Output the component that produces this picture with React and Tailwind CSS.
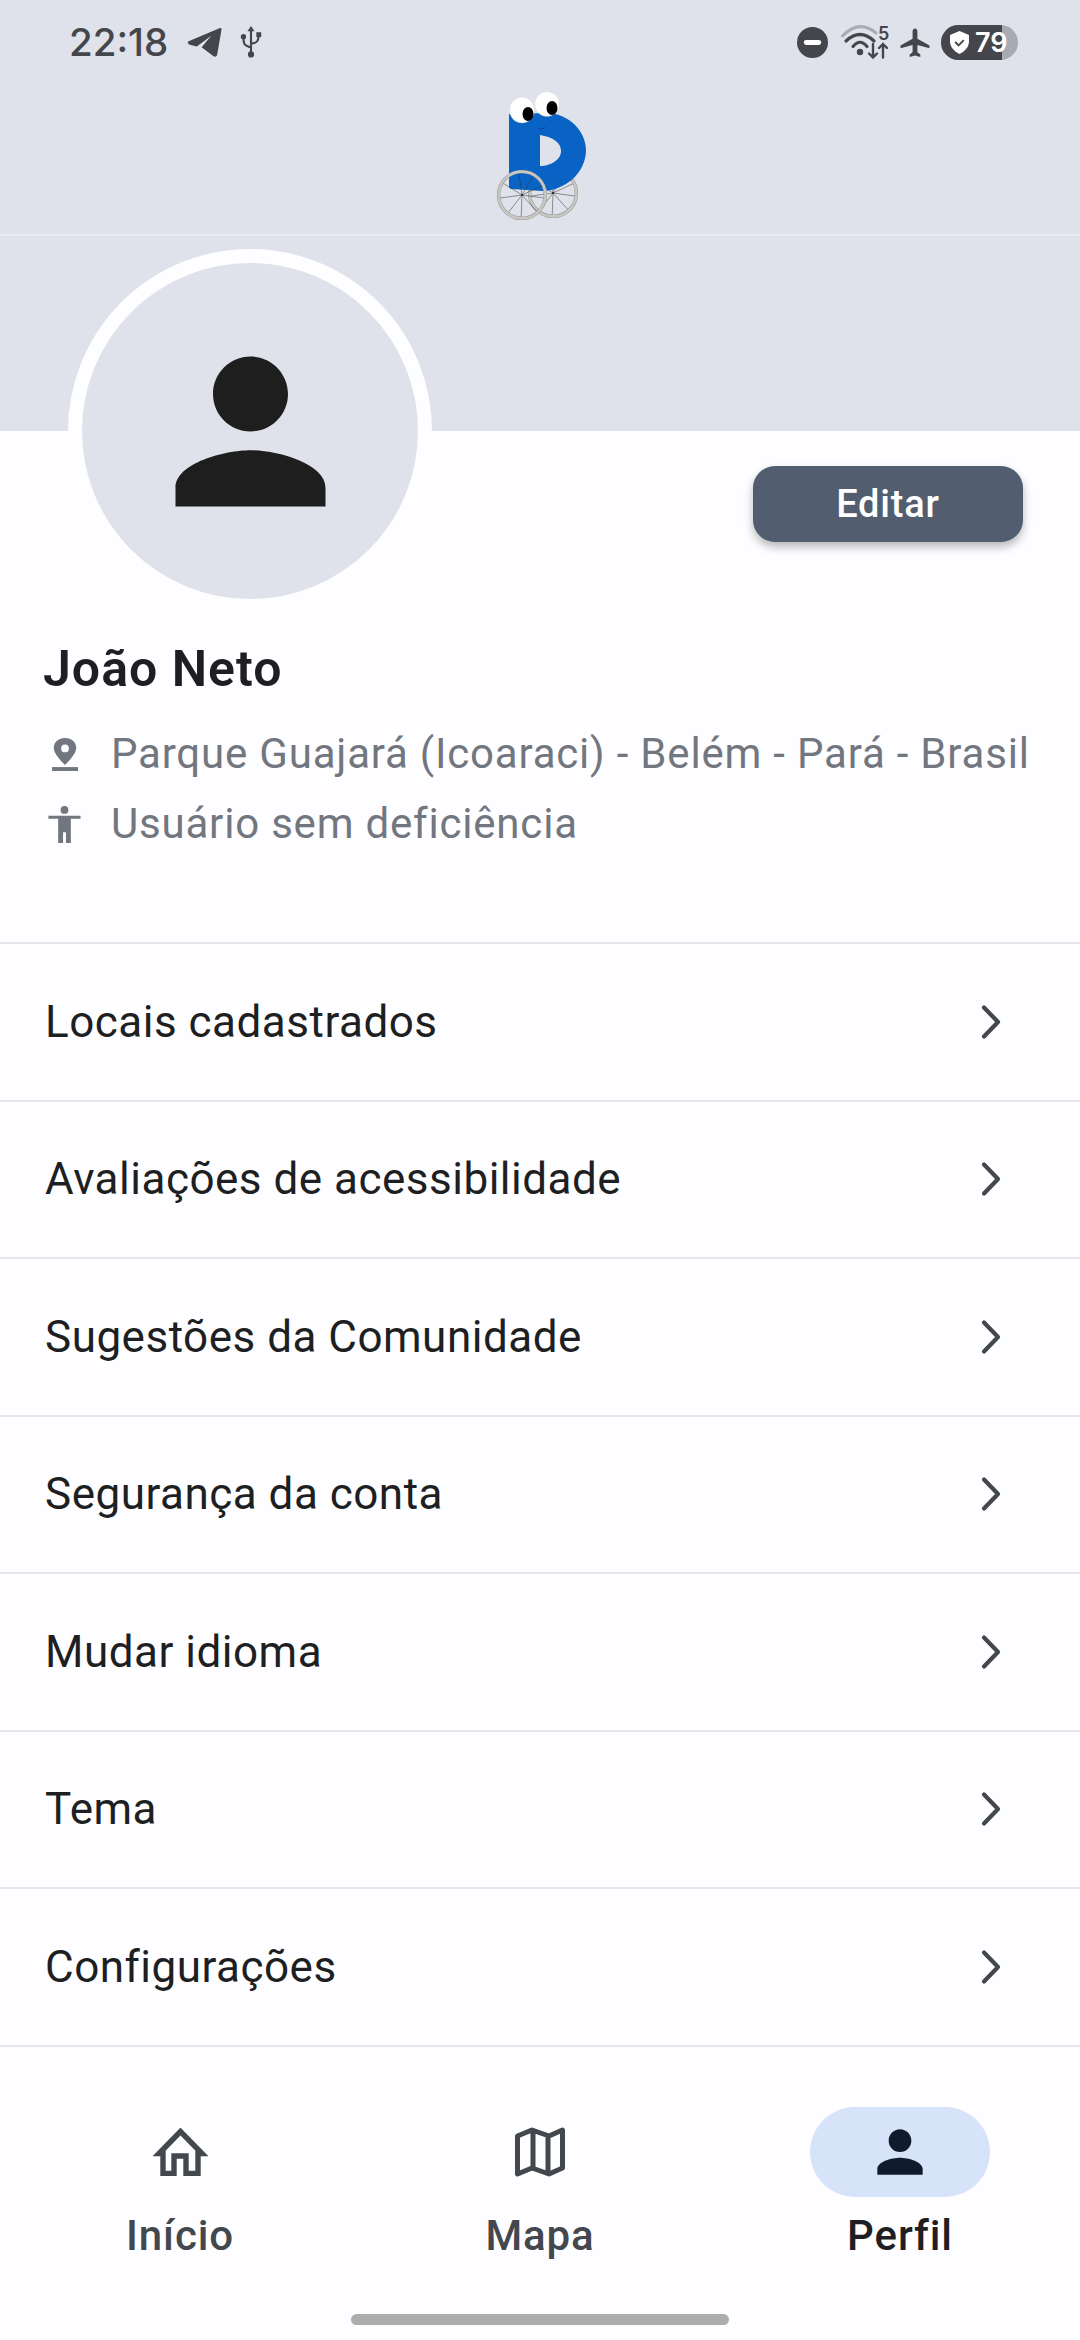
import React from 'react';

const menuItems = [
    'Locais cadastrados',
    'Avaliações de acessibilidade',
    'Sugestões da Comunidade',
    'Segurança da conta',
    'Mudar idioma',
    'Tema',
    'Configurações',
];

const PersonIcon = ({ className }) => (
    <svg viewBox="0 0 24 24" className={className} fill="currentColor">
        <path d="M12 12c2.21 0 4-1.79 4-4s-1.79-4-4-4-4 1.79-4 4 1.79 4 4 4zm0 2c-2.67 0-8 1.34-8 4v2h16v-2c0-2.66-5.33-4-8-4z" />
    </svg>
);

const Wheel = ({ cx, cy, r }) => {
    const spokes = [8, 48, 92, 128, 172, 212, 262, 300, 335];
    return (
        <g>
            {spokes.map(a => (
                <line
                    key={a}
                    x1={cx}
                    y1={cy}
                    x2={cx + Math.cos(a * Math.PI / 180) * (r - 2)}
                    y2={cy + Math.sin(a * Math.PI / 180) * (r - 2)}
                    stroke="#333"
                    strokeWidth="0.5"
                />
            ))}
            <circle cx={cx} cy={cy} r={r - 1.6} fill="none" stroke="#8f8f8c" strokeWidth="3.4" />
            <circle cx={cx} cy={cy} r={r - 1.6} fill="none" stroke="#c8c7c3" strokeWidth="2.6" />
            <circle cx={cx} cy={cy} r="1" fill="#222" />
        </g>
    );
};

// mascote: letra D azul com olhos e rodas
const Logo = () => (
    <svg viewBox="0 0 150 170" className="w-[150px] h-[170px]">
        <Wheel cx={93} cy={123} r={25} />
        <path d="M49 44 L85 43 C110 43 126 62 126 80 C126 103 105 121 82 121 L52 119 Q49 119 49 116 Z" fill="#0863c4" />
        <path d="M80 65 C92 67 101 72 101 81 C101 90 90 96 80 96 Z" fill="#dfe2eb" />
        <path d="M77 57 Q81.5 61 86 57" fill="none" stroke="#0a3f7f" strokeWidth="0.6" />
        <Wheel cx={62} cy={125} r={25} />
        <ellipse cx="62" cy="40" rx="12.5" ry="13" fill="#fff" stroke="#c9c9c9" strokeWidth="0.4" />
        <ellipse cx="68" cy="44" rx="5.5" ry="7" fill="#000" />
        <ellipse cx="87" cy="34" rx="12.5" ry="12.5" fill="#fff" stroke="#c9c9c9" strokeWidth="0.4" />
        <ellipse cx="92" cy="38" rx="5.5" ry="7" fill="#000" />
    </svg>
);

const StatusLeft = () => (
    <div className="flex items-center">
        <span className="text-[38.5px] leading-none font-medium text-[#45464b] font-['Inter',sans-serif]">22:18</span>
        <svg viewBox="0 0 36 32" className="w-[35px] h-[31px] ml-[19px]" fill="#45464b">
            <path d="M1 15 L34 1 Q36 0.5 35.5 3 L31 29 Q30 32 27 30 L15 21 L25 9 L10 20 L2 18 Q0 16 1 15 Z" />
        </svg>
        <svg viewBox="0 0 24 36" className="w-[22px] h-[32px] ml-[18px]" fill="none" stroke="#45464b" strokeWidth="2.4">
            <path d="M12 4 V31 M12 24 C4 22 3.5 20 3.5 13 M12 20 C20 19 20.5 16 20.5 10" />
            <path d="M12 0 L16 6 H8 Z" fill="#45464b" stroke="none" />
            <circle cx="12" cy="32" r="3.5" fill="#45464b" stroke="none" />
            <circle cx="3.5" cy="12" r="3" fill="#45464b" stroke="none" />
            <rect x="18" y="7" width="5.5" height="5.5" fill="#45464b" stroke="none" />
        </svg>
    </div>
);

const StatusRight = () => (
    <div className="flex items-center">
        <svg viewBox="0 0 32 32" className="w-[31px] h-[31px]">
            <circle cx="16" cy="16" r="16" fill="#45464b" />
            <rect x="7" y="13.5" width="18" height="5" rx="2.5" fill="#fff" />
        </svg>
        <svg viewBox="0 0 49 36" className="w-[49px] h-[36px] ml-[13px]" fill="none" strokeLinecap="round">
            <path d="M1.5 12 Q18 -5 35 9" stroke="#a9abb2" strokeWidth="3" />
            <path d="M5 17 Q19 4 33 17" stroke="#45464b" strokeWidth="3.2" />
            <path d="M12 22.5 Q19 14 26 22.5" stroke="#45464b" strokeWidth="3.2" />
            <circle cx="19" cy="28" r="3.2" fill="#45464b" />
            <path d="M32 20 V33.5 M28 29.5 L32 33.5 L36 29.5 M42 33.5 V20 M38 24 L42 20 L46 24" stroke="#45464b" strokeWidth="2.4" />
            <text x="37" y="16" fontSize="18" fontWeight="600" fill="#45464b" fontFamily="Inter, sans-serif">5</text>
        </svg>
        <svg viewBox="0 0 30 30" className="w-[30px] h-[29px] ml-[10px]" fill="#45464b">
            <path d="M12.5 11 V3.5 C12.5 -0.5 17.5 -0.5 17.5 3.5 V11 L30 18 V21 L17.5 17.5 V25 L20.5 27.5 V30 L15 28.5 L9.5 30 V27.5 L12.5 25 V17.5 L0 21 V18 Z" />
        </svg>
        <div className="relative w-[77px] h-[35px] ml-[11px] rounded-full bg-[#a8aab1] overflow-hidden">
            <div className="absolute inset-y-0 left-0 w-[61px] bg-[#45464b]" />
            <div className="absolute inset-0 flex items-center pl-[9px]">
                <svg viewBox="0 0 20 24" className="w-[19px] h-[23px]">
                    <path d="M10 0 L20 4 V11 C20 17 15 22 10 24 C5 22 0 17 0 11 V4 Z" fill="#fff" />
                    <path d="M5.5 11.5 L9 15 L14.5 9.5" fill="none" stroke="#45464b" strokeWidth="2" />
                </svg>
                <span className="ml-[6px] text-[27px] leading-none font-semibold text-white font-['Inter',sans-serif]">79</span>
            </div>
        </div>
    </div>
);

const MetaRow = ({ icon, children }) => (
    <div className="flex items-center h-[70px]">
        <div className="w-[68px] flex-none">{icon}</div>
        <span className="text-[42px] tracking-[0.8px] leading-none text-[#72767f] whitespace-nowrap">{children}</span>
    </div>
);

const NavItem = ({ label, active, children }) => (
    <div className="flex flex-col items-center w-[360px]">
        <div className={`w-[180px] h-[90px] rounded-full flex items-center justify-center ${active ? 'bg-[#d7e3f8]' : ''}`}>
            {children}
        </div>
        <span className={`mt-[14px] text-[42px] leading-[50px] font-medium tracking-[0.9px] ${active ? 'text-[#1d1f22]' : 'text-[#43474e]'}`}>
            {label}
        </span>
    </div>
);

export default function App() {
    return (
        <div className="relative w-[1080px] h-[2340px] overflow-hidden bg-[#fefdff] font-['Roboto',sans-serif]">
            {/* app bar */}
            <div className="h-[236px] bg-[#dfe2eb] border-b-2 border-[#e9ebf2] relative">
                <div className="flex items-center justify-between h-[36px] pl-[69px] pr-[62px] translate-y-[24px]">
                    <StatusLeft />
                    <StatusRight />
                </div>
                <div className="absolute left-[460px] top-[70px]">
                    <Logo />
                </div>
            </div>

            {/* banner */}
            <div className="h-[195px] bg-[#dfe2eb]" />

            {/* avatar */}
            <div className="absolute left-[68px] top-[249px] w-[364px] h-[364px] rounded-full border-[14px] border-[#fefdff] bg-[#dfe2eb] flex items-center justify-center">
                <PersonIcon className="w-[225px] h-[225px] text-[#1e1e1f]" />
            </div>

            <div className="flex justify-end pt-[35px] pr-[57px]">
                <button className="w-[270px] h-[76px] rounded-[22px] bg-[#535d70] text-white text-[38px] font-medium tracking-[0.8px] shadow-[0_5px_10px_rgba(0,0,0,0.28)]">
                    Editar
                </button>
            </div>

            <div className="pl-[43px] pt-[99px]">
                <h1 className="text-[50px] leading-[56px] font-semibold tracking-[1px] text-[#1d1f22]">João Neto</h1>
                <div className="mt-[22px]">
                    <MetaRow
                        icon={
                            <svg viewBox="0 0 30 38" className="w-[26px] h-[37px] ml-[9px]" fill="#72767f">
                                <path fillRule="evenodd" d="M15 0 C6 0 2 6 2 11.5 C2 19 15 31 15 31 C15 31 28 19 28 11.5 C28 6 24 0 15 0 Z M15 7.5 A4.5 4.5 0 1 1 15 16.5 A4.5 4.5 0 1 1 15 7.5 Z" />
                                <rect x="0" y="33.5" width="30" height="4.5" />
                            </svg>
                        }
                    >
                        Parque Guajará (Icoaraci) - Belém - Pará - Brasil
                    </MetaRow>
                    <MetaRow
                        icon={
                            <svg viewBox="0 0 33 38" className="w-[33px] h-[37px] ml-[5px]" fill="#72767f">
                                <circle cx="16.5" cy="4" r="4" />
                                <path d="M0 10 H33 V13 H23 V38 H18 V27 H15 V38 H10 V13 H0 Z" />
                            </svg>
                        }
                    >
                        Usuário sem deficiência
                    </MetaRow>
                </div>
            </div>

            {/* menu */}
            <div className="absolute left-0 right-0 top-[942px]">
                {menuItems.map(item => (
                    <div key={item} className="h-[157.5px] border-t-2 border-[#e6e6ec] flex items-center justify-between pl-[45px] pr-[76px]">
                        <span className="text-[44px] leading-none text-[#1d1f22] tracking-[0.5px]">{item}</span>
                        <svg viewBox="0 0 24 38" className="w-[24px] h-[38px]" fill="none" stroke="#43474e" strokeWidth="4.2" strokeLinecap="round" strokeLinejoin="round">
                            <path d="M4 4.5 L18 19 L4 33.5" />
                        </svg>
                    </div>
                ))}
                <div className="border-t-2 border-[#e6e6ec]" />
            </div>

            {/* bottom nav */}
            <div className="absolute left-0 right-0 top-[2107px] flex">
                <NavItem label="Início">
                    <svg viewBox="0 0 55 48" className="w-[55px] h-[48px]" fill="none" stroke="#43474e" strokeWidth="5.4">
                        <path d="M27.5 3.5 L6 25.5 H10 V45.5 H21 V28 H33 V45.5 H45 V25.5 H49 Z" />
                    </svg>
                </NavItem>
                <NavItem label="Mapa">
                    <svg viewBox="0 0 50 50" className="w-[50px] h-[50px]" fill="none" stroke="#43474e" strokeWidth="5" strokeLinejoin="round">
                        <path d="M2.5 9 L17 3 L34 9 L47.5 3 V41 L34 47 L17 41 L2.5 47 Z M18 3 V41 M33 9 V47" />
                    </svg>
                </NavItem>
                <NavItem label="Perfil" active>
                    <PersonIcon className="w-[68px] h-[68px] text-[#101c2b]" />
                </NavItem>
            </div>

            {/* home indicator */}
            <div className="absolute left-[351px] top-[2314px] w-[378px] h-[11px] rounded-full bg-[#adadae]" />
        </div>
    );
}
